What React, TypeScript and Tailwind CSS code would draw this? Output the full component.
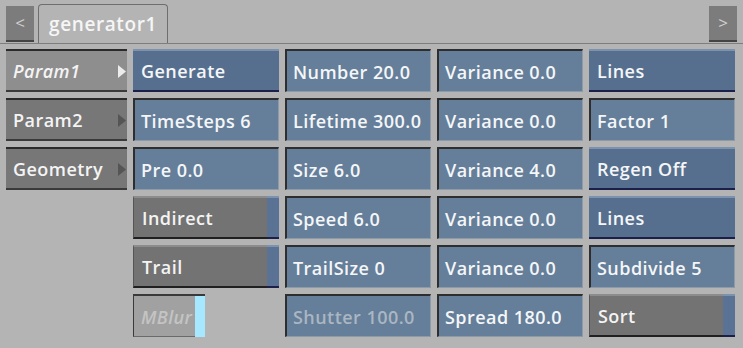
import React from 'react';

type Kind = 'field' | 'raised' | 'toggle' | 'dimField' | 'dimToggle';

interface CellProps {
  label: string;
  kind: Kind;
}

const font = { fontFamily: '"Open Sans", "DejaVu Sans", sans-serif' };

function Cell({ label, kind }: CellProps) {
  if (kind === 'field' || kind === 'dimField') {
    return (
      <div
        className={`flex h-[43px] items-center border-t-2 border-l-2 border-[#2e2e2e] border-b border-r border-b-[#8d9aa8] border-r-[#8d9aa8] bg-[#657e99] pl-[6px] pt-[2px] text-[18px] font-semibold tracking-[0.45px] ${
          kind === 'dimField' ? 'text-[#aab6c2]' : 'text-[#f4f6f8]'
        }`}
      >
        {label}
      </div>
    );
  }
  if (kind === 'raised') {
    return (
      <div className="flex h-[43px] items-center border-t-2 border-[#7d93ad] border-b-2 border-b-[#1c1f4a] bg-[#566f8e] pl-[8px] pt-[1px] text-[18px] font-semibold tracking-[0.45px] text-[#f4f6f8]">
        {label}
      </div>
    );
  }
  if (kind === 'toggle') {
    return (
      <div className="flex h-[43px]">
        <div className="flex flex-1 items-center border-t-2 border-[#8c8c8c] border-b-2 border-b-[#202020] border-l border-l-[#555] bg-[#737373] pl-[8px] pt-[1px] text-[18px] font-semibold tracking-[0.45px] text-[#f4f4f4]">
          {label}
        </div>
        <div className="w-[12px] border-t-2 border-[#7d93ad] border-b-2 border-b-[#1c1f4a] bg-[#5a7394]" />
      </div>
    );
  }
  return (
    <div className="flex h-[43px] w-[72px]">
      <div className="flex flex-1 items-center overflow-hidden whitespace-nowrap border-t-2 border-l border-[#3a3a3a] border-b border-b-[#6a6a6a] bg-[#a1a1a1] pl-[7px] pt-[2px] text-[18px] font-semibold italic tracking-[0.4px] text-[#c4c4c4]">
        {label}
      </div>
      <div className="w-[10px] border-t-2 border-[#3a3a3a] bg-[#a5e8ff]" />
    </div>
  );
}

function ParamButton({ label, active }: { label: string; active?: boolean }) {
  return (
    <div
      className={`flex h-[43px] items-center justify-between border-t-2 border-[#2a2a2a] border-b-2 border-b-[#3a3a3a] pl-[7px] pr-[1px] pt-[1px] text-[18px] font-semibold tracking-[0.45px] text-[#f4f4f4] ${
        active ? 'bg-[#8e8e8e] italic' : 'bg-[#777777]'
      }`}
    >
      <span>{label}</span>
      <svg width="8" height="13" viewBox="0 0 8 13">
        <path d="M0 0 L8 6.5 L0 13 Z" fill={active ? '#ececec' : '#555555'} />
      </svg>
    </div>
  );
}

const rows: [string, Kind][][] = [
  [['Generate', 'raised'], ['Number 20.0', 'field'], ['Variance 0.0', 'field'], ['Lines', 'raised']],
  [['TimeSteps 6', 'field'], ['Lifetime 300.0', 'field'], ['Variance 0.0', 'field'], ['Factor 1', 'field']],
  [['Pre 0.0', 'field'], ['Size 6.0', 'field'], ['Variance 4.0', 'field'], ['Regen Off', 'raised']],
  [['Indirect', 'toggle'], ['Speed 6.0', 'field'], ['Variance 0.0', 'field'], ['Lines', 'raised']],
  [['Trail', 'toggle'], ['TrailSize 0', 'field'], ['Variance 0.0', 'field'], ['Subdivide 5', 'field']],
  [['MBlur', 'dimToggle'], ['Shutter 100.0', 'dimField'], ['Spread 180.0', 'field'], ['Sort', 'toggle']],
];

const params = ['Param1', 'Param2', 'Geometry'];

export default function App() {
  return (
    <div className="h-[348px] w-[743px] overflow-hidden bg-[#b4b4b4]" style={font}>
      <div className="flex h-[44px] items-end border-b border-[#7e7e7e] px-[6px]">
        <div className="mb-[1px] flex h-[36px] w-[28px] items-center justify-center border-b-2 border-[#444] bg-[#7c7c7c] text-[17px] text-[#d0d0d0]">
          &lt;
        </div>
        <div className="ml-[4px] flex h-[39px] w-[130px] items-center justify-center rounded-t-[4px] border border-b-0 border-[#6e6e6e] bg-[#b4b4b4] text-[19px] font-semibold tracking-[0.6px] text-[#f6f6f6]">
          generator1
        </div>
        <div className="flex-1" />
        <div className="mb-[1px] flex h-[36px] w-[28px] items-center justify-center border-b-2 border-[#444] bg-[#7c7c7c] text-[17px] text-[#d0d0d0]">
          &gt;
        </div>
      </div>
      <div className="grid grid-cols-[121px_146px_146px_146px_146px] gap-x-[6px] gap-y-[6px] px-[6px] pt-[5px]">
        {rows.map((row, r) => (
          <React.Fragment key={r}>
            <div>{r < 3 ? <ParamButton label={params[r]} active={r === 0} /> : null}</div>
            {row.map(([label, kind], c) => (
              <Cell key={c} label={label} kind={kind} />
            ))}
          </React.Fragment>
        ))}
      </div>
    </div>
  );
}
